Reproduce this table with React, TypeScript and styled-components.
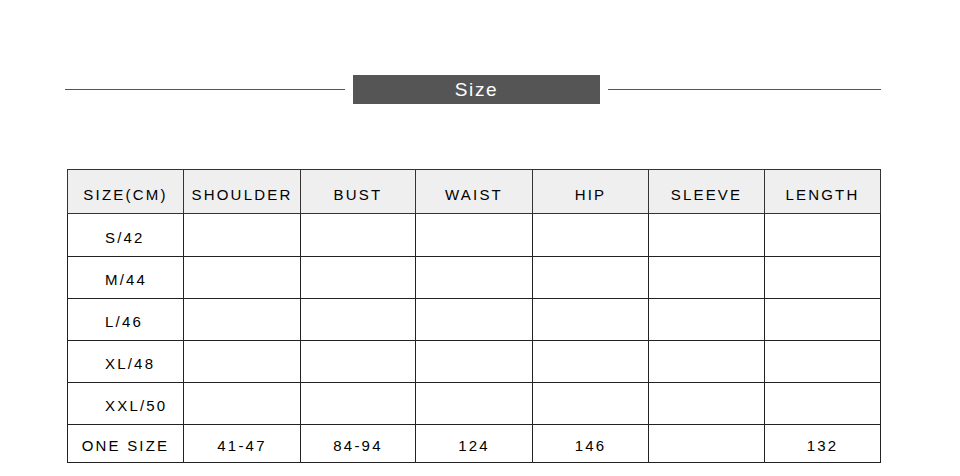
import {FC} from "react"
import styled, {createGlobalStyle} from "styled-components"

const GlobalStyle = createGlobalStyle`
  body {
    margin: 0;
    background: #fff;
    font-family: "Liberation Sans", Arial, sans-serif;
  }
`

const columns = ["SIZE(CM)", "SHOULDER", "BUST", "WAIST", "HIP", "SLEEVE", "LENGTH"]
const widths = [116, 117, 115, 117, 116, 116, 116]

const rows: {label: string, values: string[], height: number}[] = [
	{label: "S/42", values: ["", "", "", "", "", ""], height: 43},
	{label: "M/44", values: ["", "", "", "", "", ""], height: 42},
	{label: "L/46", values: ["", "", "", "", "", ""], height: 42},
	{label: "XL/48", values: ["", "", "", "", "", ""], height: 42},
	{label: "XXL/50", values: ["", "", "", "", "", ""], height: 42},
]

const App: FC = () => {
	return <Page>
		<GlobalStyle/>
		<TitleBar>
			<Rule $width={280}/>
			<TitleBox>Size</TitleBox>
			<Rule $width={273}/>
		</TitleBar>
		<SizeTable>
			<colgroup>
				{widths.map((w, i) => <col key={i} style={{width: w}}/>)}
			</colgroup>
			<thead>
			<tr>
				{columns.map(c => <HeadCell key={c}>{c}</HeadCell>)}
			</tr>
			</thead>
			<tbody>
			{rows.map(r => <tr key={r.label}>
				<LabelCell $h={r.height}>{r.label}</LabelCell>
				{r.values.map((v, i) => <Cell key={i} $h={r.height}>{v}</Cell>)}
			</tr>)}
			<tr>
				<Cell $h={38} $top={3}>ONE SIZE</Cell>
				<Cell $h={38} $top={3}>41-47</Cell>
				<Cell $h={38} $top={3}>84-94</Cell>
				<Cell $h={38} $top={3}>124</Cell>
				<Cell $h={38} $top={3}>146</Cell>
				<Cell $h={38} $top={3}></Cell>
				<Cell $h={38} $top={3}>132</Cell>
			</tr>
			</tbody>
		</SizeTable>
	</Page>
}
export default App

const Page = styled.div`
  width: 960px;
  height: 476px;
  padding-top: 75px;
  box-sizing: border-box;
  overflow: hidden;
`

const TitleBar = styled.div`
  display: flex;
  align-items: center;
  gap: 8px;
  margin-left: 65px;
  height: 29px;
`

const Rule = styled.div<{ $width: number }>`
  width: ${p => p.$width}px;
  height: 1px;
  background: #555;
`

const TitleBox = styled.div`
  width: 247px;
  height: 29px;
  background: #555;
  color: #fff;
  font-size: 19px;
  letter-spacing: 1.6px;
  display: flex;
  align-items: center;
  justify-content: center;
  padding-top: 1px;
  box-sizing: border-box;
`

const SizeTable = styled.table`
  margin-top: 65px;
  margin-left: 67px;
  width: 814px;
  table-layout: fixed;
  border-collapse: collapse;
  color: #000;
  font-size: 15px;
  letter-spacing: 2.2px;
`

const HeadCell = styled.th`
  height: 44px;
  padding: 5px 0 0;
  font-weight: normal;
  background: #efefef;
  border: 1px solid #333;
  text-align: center;
  box-sizing: border-box;
`

const Cell = styled.td<{ $h: number, $top?: number }>`
  height: ${p => p.$h}px;
  padding: ${p => p.$top ?? 4}px 0 0;
  border: 1px solid #222;
  text-align: center;
  box-sizing: border-box;
`

const LabelCell = styled(Cell)`
  text-align: left;
  padding-left: 37px;
`
